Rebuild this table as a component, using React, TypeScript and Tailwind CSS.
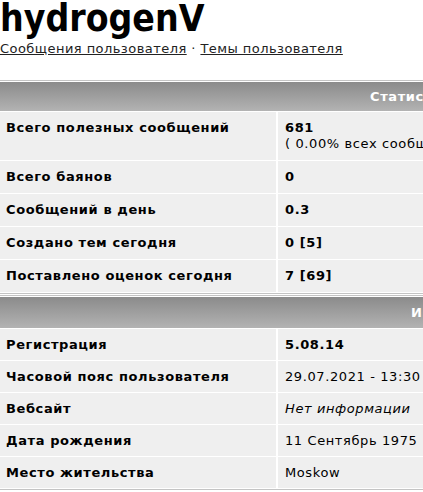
import React from "react";

type Row = { label: string; value: React.ReactNode };

const stats: Row[] = [
  {
    label: "Всего полезных сообщений",
    value: (
      <>
        <span className="font-bold">681</span>
        <br />
        <span>( 0.00% всех сообщений / 0.3 сообщений в день )</span>
      </>
    ),
  },
  { label: "Всего баянов", value: <span className="font-bold">0</span> },
  { label: "Сообщений в день", value: <span className="font-bold">0.3</span> },
  { label: "Создано тем сегодня", value: <span className="font-bold">0 [5]</span> },
  { label: "Поставлено оценок сегодня", value: <span className="font-bold">7 [69]</span> },
];

const info: Row[] = [
  { label: "Регистрация", value: <span className="font-bold">5.08.14</span> },
  { label: "Часовой пояс пользователя", value: <span>29.07.2021 - 13:30</span> },
  { label: "Вебсайт", value: <span className="italic">Нет информации</span> },
  { label: "Дата рождения", value: <span>11 Сентябрь 1975</span> },
  { label: "Место жительства", value: <span>Moskow</span> },
];

function InfoTable({
  title,
  titleOffset,
  headerHeight,
  rowLeading,
  rows,
}: {
  title: string;
  titleOffset: string;
  headerHeight: string;
  rowLeading: string;
  rows: Row[];
}) {
  return (
    <div className="border-y border-[#c4c4c4] py-px">
      <div
        className={`${headerHeight} ${titleOffset} flex items-center bg-gradient-to-b from-[#8b8b8b] to-[#b3b3b3] text-white font-bold whitespace-nowrap`}
      >
        {title}
      </div>
      <div className="mt-px grid grid-cols-[276px_1fr] gap-x-[2px] gap-y-px">
        {rows.map((r) => (
          <React.Fragment key={r.label}>
            <div className={`bg-[#efefef] px-[6px] py-2 ${rowLeading} font-bold`}>{r.label}</div>
            <div className={`bg-[#efefef] px-[7px] py-2 ${rowLeading} whitespace-nowrap`}>{r.value}</div>
          </React.Fragment>
        ))}
      </div>
    </div>
  );
}

export default function App() {
  return (
    <div className="w-full overflow-hidden bg-white text-black font-['DejaVu_Sans',sans-serif] text-[13px] tracking-[0.6px]">
      <div className="w-[900px]">
        <h1 className="font-['DejaVu_Sans_Condensed','Liberation_Sans',sans-serif] font-bold text-[37px] leading-[38px] tracking-normal">
          hydrogenV
        </h1>
        <div className="mt-[3px] leading-4 text-[#222] tracking-[0.45px]">
          <a className="underline" href="#">Сообщения пользователя</a>
          <span> · </span>
          <a className="underline" href="#">Темы пользователя</a>
        </div>

        <div className="mt-[23px]">
          <InfoTable
            title="Статистика"
            titleOffset="pl-[370px]"
            headerHeight="h-[29px]"
            rowLeading="leading-4"
            rows={stats}
          />
        </div>
        <div className="mt-px">
          <InfoTable
            title="Информация"
            titleOffset="pl-[411px]"
            headerHeight="h-[31px]"
            rowLeading="leading-[15px]"
            rows={info}
          />
        </div>
      </div>
    </div>
  );
}
